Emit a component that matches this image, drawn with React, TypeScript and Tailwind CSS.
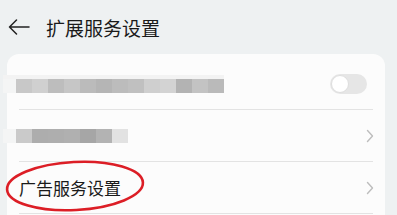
import React from "react";

const row1 = ["#c8c8c8", "#d0d0d0", "#bdbdbd", "#c6c6c6", "#bbbbbb", "#b5b5b5", "#bcbcbc", "#c0c0c0", "#cfcfcf", "#d3d3d3", "#b3b3b3", "#c3c3c3", "#bababa"];
const row2 = ["#cacaca", "#adadad", "#aeaeae", "#b0b0b0", "#a6a6a6", "#b3b3b3", "#e2e2e2"];

function Chevron() {
    return (
        <svg width="8" height="14" viewBox="0 0 8 14" className="-mr-[1px]">
            <path d="M1.5 1.5 L6.5 7 L1.5 12.5" fill="none" stroke="#bdbdbd" strokeWidth="1.4" strokeLinecap="round" strokeLinejoin="round" />
        </svg>
    );
}

// 打码区域
function Blur({ colors, long }: { colors: string[]; long?: boolean }) {
    return (
        <div className="-ml-[16px] flex flex-col">
            {long && <div className="h-[4px] bg-[#f3f3f3]" />}
            <div className="flex h-[14px]">
                <div className="w-[13px] bg-[#f4f5f5]" />
                {colors.map((c, i) => (
                    <div key={i} className="w-[16px]" style={{ backgroundColor: c }} />
                ))}
            </div>
        </div>
    );
}

export default function App() {
    return (
        <div className="w-[397px] h-[215px] overflow-hidden bg-[#eef1f2]" style={{ fontFamily: '"Noto Sans CJK SC", "Noto Sans", sans-serif' }}>
            {/* 标题栏 */}
            <div className="h-[54px] flex items-center">
                <svg width="22" height="16" viewBox="0 0 22 16" className="ml-[8px]">
                    <path d="M21 8 H1.5 M8.5 1 L1.5 8 L8.5 15" fill="none" stroke="#222" strokeWidth="1.5" strokeLinecap="round" strokeLinejoin="round" />
                </svg>
                <h1 className="ml-[16px] text-[19px] text-[#1a1a1a] leading-none">扩展服务设置</h1>
            </div>

            {/* 设置卡片 */}
            <div className="relative ml-[7px] w-[378px] bg-[#fcfcfc] rounded-[12px] pt-[4px] px-[12px]">
                <div className="h-[52px] flex items-center justify-between border-b border-[#e3e3e3]">
                    <div className="mt-[1px]">
                        <Blur colors={row1} long />
                    </div>
                    <div className="w-[37px] h-[20px] rounded-full bg-[#e6e6e6] flex items-center mr-[6px]">
                        <div className="w-[18px] h-[18px] ml-[1px] rounded-full bg-white border border-[#dedede]" />
                    </div>
                </div>
                <div className="h-[52px] flex items-center justify-between border-b border-[#e3e3e3]">
                    <Blur colors={row2} />
                    <Chevron />
                </div>
                <div className="relative h-[52px] flex items-center justify-between border-b border-[#e3e3e3]">
                    <span className="text-[17px] text-[#1a1a1a] leading-none">广告服务设置</span>
                    <Chevron />
                    <svg width="144" height="56" viewBox="0 0 144 56" className="absolute -left-[15px] -top-[3px]">
                        <ellipse cx="71" cy="27" rx="68" ry="24" fill="none" stroke="#dc1e26" strokeWidth="2.6" transform="rotate(-3 71 27)" />
                    </svg>
                </div>
                <div className="h-[20px]" />
            </div>
        </div>
    );
}
